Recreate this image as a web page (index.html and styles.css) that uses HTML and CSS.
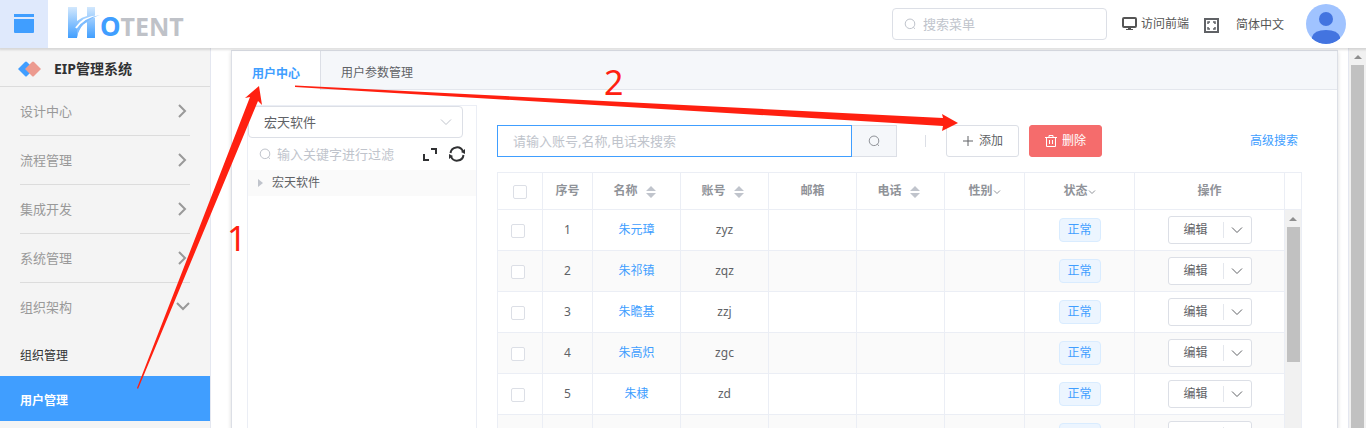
FILE: index.html
```html
<!DOCTYPE html>
<html lang="zh-CN">
<head>
    <meta charset="UTF-8">
    <meta name="viewport" content="width=device-width, initial-scale=1.0">
    <title>EIP管理系统</title>
    <link rel="stylesheet" href="styles.css">
</head>
<body>
    <!-- shared icons -->
    <svg class="sprite" aria-hidden="true">
        <symbol id="search" viewBox="0 0 12 12"><path d="M9.300 9.300A4.800 4.800 0 1 1 10.800 6q0 2-1.500 3.300l1.700 1.500" fill="none" stroke="currentColor"/></symbol>
        <symbol id="down" viewBox="0 0 12 12"><path d="M1 3.500l5 5 5-5" fill="none" stroke="currentColor"/></symbol>
        <symbol id="small-down" viewBox="0 0 8 8"><path d="M1 2.500l3 3 3-3" fill="none" stroke="currentColor"/></symbol>
        <symbol id="right" viewBox="0 0 14 14"><path d="M3 1l6 6-6 6" fill="none" stroke="currentColor" stroke-width="2"/></symbol>
        <symbol id="sort" viewBox="0 0 10 12"><path d="M0 5l5-5 5 5zM0 7l5 5 5-5z" fill="currentColor"/></symbol>
    </svg>

    <div class="app">
        <header class="header">
            <button class="menu-btn" aria-label="菜单">
                <svg width="20" height="20" viewBox="0 0 20 20"><path d="M0 0h20v3H0zM0 5h20v13q0 1-1 1H1q-1 0-1-1z" fill="#409eff"/></svg>
            </button>
            <a class="logo" href="#">
                <svg width="32" height="32" viewBox="0 0 32 32">
                    <defs>
                        <linearGradient id="blue" gradientUnits="userSpaceOnUse" x1="0" y1="0" x2="0" y2="31">
                            <stop offset="0" stop-color="#d3e8fd"/>
                            <stop offset="1" stop-color="#419fff"/>
                        </linearGradient>
                    </defs>
                    <path d="M0 0h9v14q5-4 10-5V0h8v31h-8V15Q10 19 9 31H0z" fill="url(#blue)"/>
                    <path d="M8 21Q15 10 31 9" fill="none" stroke="#fff" stroke-width="2"/>
                    <path d="M9 22Q17 10 32 8q-9 3-13 7Q12 18 9 30z" fill="#7dbcff"/>
                </svg>
                <span class="logo-o">O</span><span class="logo-text">TENT</span>
            </a>
            <label class="search-menu">
                <svg width="12" height="12"><use href="#search"/></svg>
                <input type="text" placeholder="搜索菜单" aria-label="搜索菜单">
            </label>
            <a class="header-link front" href="#">
                <svg width="15" height="14" viewBox="0 0 15 14"><rect x="1" y="1" width="13" height="9" rx="1" fill="none" stroke="currentColor" stroke-width="2"/><path d="M6 10h3v2h2v1H4v-1h2z" fill="currentColor"/></svg>
                访问前端
            </a>
            <button class="full-btn" aria-label="全屏">
                <svg width="15" height="15" viewBox="0 0 15 15"><rect x="1" y="1" width="13" height="13" fill="none" stroke="currentColor" stroke-width="2"/><path d="M4 6V4h2M9 4h2v2M11 9v2H9M6 11H4V9" fill="none" stroke="currentColor" stroke-width="1.500"/></svg>
            </button>
            <a class="header-link lang" href="#">简体中文</a>
            <svg class="avatar" width="40" height="40" viewBox="0 0 40 40">
                <clipPath id="circle"><circle cx="20" cy="20" r="20"/></clipPath>
                <g clip-path="url(#circle)"><rect width="40" height="40" fill="#a0c3ff"/><circle cx="20" cy="15" r="7" fill="#4374e0"/><path d="M6 33q2-7 14-7t14 7v2q-6 5-14 5T6 35z" fill="#4374e0"/></g>
            </svg>
        </header>

        <div class="body">
            <nav class="sidebar">
                <div class="system">
                    <svg width="24" height="16" viewBox="0 0 24 16"><path d="M0 8l7-7q1-1 2 0l7 7-7 7q-1 1-2 0z" fill="#409eff"/><path d="M7 8l7-7q1-1 2 0l7 7-7 7q-1 1-2 0z" fill="#ec9a8f"/></svg>
                    EIP管理系统
                </div>
                <a class="menu-item" href="#">设计中心<svg width="14" height="14"><use href="#right"/></svg></a>
                <a class="menu-item" href="#">流程管理<svg width="14" height="14"><use href="#right"/></svg></a>
                <a class="menu-item" href="#">集成开发<svg width="14" height="14"><use href="#right"/></svg></a>
                <a class="menu-item" href="#">系统管理<svg width="14" height="14"><use href="#right"/></svg></a>
                <a class="menu-item open" href="#">组织架构<svg width="14" height="14"><use href="#right"/></svg></a>
                <a class="sub-item" href="#">组织管理</a>
                <a class="sub-item active" href="#">用户管理</a>
            </nav>

            <main class="main">
                <section class="panel">
                    <div class="tabs">
                        <a class="tab active" href="#">用户中心</a>
                        <a class="tab" href="#">用户参数管理</a>
                    </div>
                    <div class="content">
                        <aside class="tree">
                            <div class="select">
                                <select aria-label="维度"><option>宏天软件</option></select>
                                <svg width="12" height="12"><use href="#down"/></svg>
                            </div>
                            <div class="filter">
                                <svg class="muted" width="12" height="12"><use href="#search"/></svg>
                                <input type="text" placeholder="输入关键字进行过滤" aria-label="过滤">
                                <button aria-label="展开"><svg width="14" height="14" viewBox="0 0 14 14"><path d="M1 7v6h5M8 2h5v5" fill="none" stroke="currentColor" stroke-width="2"/></svg></button>
                                <button aria-label="刷新"><svg width="16" height="16" viewBox="0 0 16 16"><path d="M1.500 7A6.500 6.500 0 0 1 14 5.500M14.500 9A6.500 6.500 0 0 1 2 10.500" fill="none" stroke="currentColor" stroke-width="2"/><path d="M16 3v5l-4-2zM0 13V8l4 2z" fill="currentColor"/></svg></button>
                            </div>
                            <div class="node">
                                <svg width="5" height="8" viewBox="0 0 5 8"><path d="M0 0l5 4-5 4z" fill="#c0c4cc"/></svg>
                                宏天软件
                            </div>
                        </aside>

                        <div class="list">
                            <div class="toolbar">
                                <div class="search">
                                    <input type="text" placeholder="请输入账号,名称,电话来搜索" aria-label="搜索用户">
                                    <button aria-label="搜索"><svg width="12" height="12"><use href="#search"/></svg></button>
                                </div>
                                <span class="divider"></span>
                                <button class="btn"><svg width="12" height="12" viewBox="0 0 12 12"><path d="M6 1v10M1 6h10" stroke="currentColor"/></svg>添加</button>
                                <button class="btn danger"><svg width="12" height="12" viewBox="0 0 12 12"><path d="M0 2.500h12M4 2V.5h4V2M1.500 2.500v9h9v-9M4.500 5v4M7.500 5v4" fill="none" stroke="currentColor"/></svg>删除</button>
                                <a class="advanced" href="#">高级搜索</a>
                            </div>

                            <div class="table-box">
                                <table>
                                    <colgroup>
                                        <col class="c-check"><col class="c-no"><col class="c-text"><col class="c-text"><col class="c-text"><col class="c-text"><col class="c-sex"><col class="c-status"><col class="c-action">
                                    </colgroup>
                                    <thead>
                                        <tr>
                                            <th><input type="checkbox" aria-label="全选"></th>
                                            <th>序号</th>
                                            <th>名称<svg class="sort" width="10" height="12"><use href="#sort"/></svg></th>
                                            <th>账号<svg class="sort" width="10" height="12"><use href="#sort"/></svg></th>
                                            <th>邮箱</th>
                                            <th>电话<svg class="sort" width="10" height="12"><use href="#sort"/></svg></th>
                                            <th>性别<svg width="8" height="8"><use href="#small-down"/></svg></th>
                                            <th>状态<svg width="8" height="8"><use href="#small-down"/></svg></th>
                                            <th>操作</th>
                                        </tr>
                                    </thead>
                                    <tbody id="users"></tbody>
                                </table>
                                <div class="gutter">
                                    <div class="gutter-head"></div>
                                    <div class="scrollbar"><i class="up"></i><i class="thumb"></i></div>
                                </div>
                            </div>
                        </div>
                    </div>
                </section>
            </main>
            <div class="scrollbar page-scroll"><i class="up"></i><i class="thumb"></i></div>
        </div>

        <!-- step arrows over the page -->
        <svg class="steps" width="1366" height="428" viewBox="0 0 1366 428">
            <path d="M138 389l-1-1L250 97l-5 1 14-12 3 19-4-4z"/>
            <path d="M295 85.500L943 118l-1-4 16 9-16 8 1-5L295 87z"/>
            <text x="227" y="251">1</text>
            <text x="604" y="95">2</text>
        </svg>
    </div>

    <script>
        const users = [
            ['朱元璋', 'zyz'],
            ['朱祁镇', 'zqz'],
            ['朱瞻基', 'zzj'],
            ['朱高炽', 'zgc'],
            ['朱棣', 'zd'],
            ['', '']
        ];

        // Fill the user table
        document.getElementById('users').innerHTML = users.map(([name, account], i) => `
            <tr>
                <td><input type="checkbox" aria-label="选择${name}"></td>
                <td>${name ? i + 1 : ''}</td>
                <td><a href="#">${name}</a></td>
                <td>${account}</td>
                <td></td>
                <td></td>
                <td></td>
                <td><span class="tag">${name ? '正常' : ''}</span></td>
                <td><button class="edit"><span>${name ? '编辑' : ''}</span><svg width="12" height="12"><use href="#down"/></svg></button></td>
            </tr>`).join('');
    </script>
</body>
</html>
```
FILE: styles.css
```css
* {
    box-sizing: border-box;
}

body {
    margin: 0;
    font-family: "Noto Sans", "Noto Sans CJK SC", sans-serif;
    font-size: 12px;
    line-height: 16px;
    color: #606266;
    background-color: #fff;
}

a {
    color: #409eff;
    text-decoration: none;
}

button, input, select {
    font: inherit;
    color: inherit;
}

button {
    padding: 0;
    border: none;
    background: none;
    cursor: pointer;
}

input::placeholder {
    color: #c0c4cc;
    opacity: 1;
}

svg {
    flex: none;
}

.sprite {
    display: none;
}

.app {
    position: relative;
    display: flex;
    flex-direction: column;
    height: 100vh;
    overflow: hidden;
}

/* header */
.header {
    position: relative;
    z-index: 1;
    display: flex;
    align-items: center;
    flex: none;
    height: 48px;
    padding-right: 20px;
    background-color: #fff;
    box-shadow: 0 1px 2px 1px rgba(0, 0, 0, 0.12);
}

.menu-btn {
    display: flex;
    align-items: center;
    justify-content: center;
    width: 48px;
    height: 48px;
    background-color: #dfe9fc;
}

.logo {
    display: flex;
    align-items: center;
    margin-left: 20px;
    margin-right: auto;
    padding-bottom: 2px;
    font-size: 25px;
    font-weight: bold;
    line-height: 32px;
}

.logo-o {
    font-size: 26px;
    padding-top: 6px;
}

.logo-text {
    color: #bfc2c8;
    padding-top: 6px;
}

.search-menu {
    display: flex;
    align-items: center;
    gap: 7px;
    width: 215px;
    height: 32px;
    padding: 0 11px;
    border: 1px solid #dcdfe6;
    border-radius: 4px;
    color: #c0c4cc;
}

.search-menu input, .filter input {
    flex: 1;
    min-width: 0;
    padding: 0;
    border: none;
    outline: none;
    background: none;
    font-size: 13px;
}

.header-link {
    display: flex;
    align-items: center;
    gap: 4px;
    color: #555;
}

.front {
    margin-left: 15px;
}

.full-btn {
    display: flex;
    margin-left: 15px;
    padding-top: 2px;
    color: #606266;
}

.lang {
    margin-left: 17px;
    padding-top: 2px;
}

.avatar {
    margin-left: 22px;
}

.body {
    display: flex;
    flex: 1;
    min-height: 0;
}

/* sidebar */
.sidebar {
    flex: none;
    width: 211px;
    border-right: 1px solid #e4e7f0;
    background-color: #f4f4f4;
}

.system {
    display: flex;
    align-items: center;
    gap: 12px;
    height: 39px;
    padding: 4px 18px 0;
    border-bottom: 1px solid #dcdcdc;
    color: #303133;
    font-size: 14px;
    font-weight: bold;
}

.menu-item {
    display: flex;
    align-items: center;
    justify-content: space-between;
    height: 49px;
    margin: 0 20px;
    border-bottom: 1px solid #dcdcdc;
    color: #999;
    font-size: 13px;
}

.menu-item.open {
    height: 48px;
    border-bottom: none;
}

.menu-item.open svg {
    transform: rotate(90deg);
}

.sub-item {
    display: flex;
    align-items: center;
    height: 45px;
    padding: 4px 20px 0;
    color: #303133;
}

.sub-item.active {
    background-color: #409eff;
    color: #fff;
    font-weight: bold;
}

/* main panel */
.main {
    flex: 1;
    min-width: 0;
    padding: 2px 10px 0 20px;
}

.panel {
    height: 100%;
    border: 1px solid #dcdfe6;
    border-bottom: none;
    box-shadow: 0 2px 4px rgba(0, 0, 0, 0.15);
}

.tabs {
    display: flex;
    height: 39px;
    border-bottom: 1px solid #e4e7ed;
    background-color: #f5f7fa;
}

.tab {
    display: flex;
    align-items: center;
    padding: 6px 20px 0;
    color: #606266;
}

.tab.active {
    height: 39px;
    border-right: 1px solid #dcdfe6;
    background-color: #fff;
    color: #409eff;
    font-weight: bold;
}

.content {
    display: flex;
    gap: 20px;
    padding: 15px 35px 0 15px;
}

/* organisation tree */
.tree {
    flex: none;
    width: 230px;
    height: 400px;
    border: 1px solid #ebeef5;
}

.select {
    position: relative;
    width: 215px;
    color: #c0c4cc;
}

.select select {
    display: block;
    width: 100%;
    height: 32px;
    padding: 0 15px;
    border: 1px solid #dcdfe6;
    border-radius: 4px;
    appearance: none;
    background-color: #fff;
    color: #606266;
    font-size: 13px;
}

.select svg {
    position: absolute;
    top: 10px;
    right: 11px;
}

.filter {
    display: flex;
    align-items: center;
    gap: 6px;
    height: 32px;
    padding: 0 11px 0 11px;
    color: #303133;
}

.filter .muted {
    color: #c0c4cc;
}

.filter button {
    display: flex;
    margin-left: 6px;
}

.node {
    display: flex;
    align-items: center;
    gap: 9px;
    height: 26px;
    padding-left: 10px;
    background-color: #fafafa;
}

/* user list */
.list {
    flex: 1;
    min-width: 0;
    padding-top: 20px;
}

.toolbar {
    display: flex;
    align-items: center;
    height: 32px;
}

.search {
    display: flex;
    width: 400px;
    height: 32px;
}

.search input {
    flex: 1;
    min-width: 0;
    padding: 0 15px;
    border: 1px solid #409eff;
    outline: none;
    font-size: 13px;
}

.search button {
    display: flex;
    align-items: center;
    justify-content: center;
    width: 45px;
    border: 1px solid #dcdfe6;
    border-left: none;
    background-color: #f5f7fa;
    color: #909399;
}

.divider {
    width: 1px;
    height: 12px;
    margin: 0 20px 0 28px;
    background-color: #dcdfe6;
}

.btn {
    display: flex;
    align-items: center;
    justify-content: center;
    gap: 5px;
    width: 73px;
    height: 32px;
    border: 1px solid #dcdfe6;
    border-radius: 3px;
    background-color: #fff;
}

.btn.danger {
    margin-left: 10px;
    border-color: #f56c6c;
    background-color: #f56c6c;
    color: #fff;
}

.advanced {
    margin-left: auto;
    margin-right: 4px;
}

.table-box {
    display: flex;
    margin-top: 15px;
    border: 1px solid #ebeef5;
}

table {
    flex: 1;
    min-width: 0;
    border-collapse: separate;
    border-spacing: 0;
    table-layout: fixed;
}

.c-check { width: 45px; }
.c-no { width: 50px; }
.c-text { width: 88px; }
.c-sex { width: 80px; }
.c-status { width: 110px; }
.c-action { width: 150px; }

th, td {
    height: 41px;
    padding: 0;
    border-right: 1px solid #ebeef5;
    border-bottom: 1px solid #ebeef5;
    text-align: center;
    vertical-align: middle;
}

th {
    height: 37px;
    color: #909399;
}

tbody tr:nth-child(even) {
    background-color: #fafafa;
}

td input, th input {
    display: block;
    width: 14px;
    height: 14px;
    margin: 2px auto 0 13px;
    border: 1px solid #dcdfe6;
    border-radius: 2px;
    appearance: none;
    background-color: #fff;
}

th input {
    margin-left: 15px;
}

th svg {
    vertical-align: middle;
    color: #909399;
}

th .sort {
    margin: 0 4px 0 8px;
    color: #c0c4cc;
}

.tag {
    display: inline-block;
    width: 42px;
    height: 24px;
    border: 1px solid #d9ecff;
    border-radius: 4px;
    background-color: #ecf5ff;
    color: #409eff;
    line-height: 22px;
    vertical-align: middle;
}

.edit {
    display: inline-flex;
    align-items: center;
    width: 84px;
    height: 28px;
    border: 1px solid #dcdfe6;
    border-radius: 3px;
    background-color: #fff;
    vertical-align: middle;
}

.edit span {
    flex: 1;
    height: 16px;
    border-right: 1px solid #e4e7ed;
}

.edit svg {
    margin: 0 8px 0 7px;
}

/* scrollbars */
.gutter {
    display: flex;
    flex-direction: column;
    flex: none;
    width: 16px;
}

.gutter-head {
    height: 37px;
    border-bottom: 1px solid #ebeef5;
}

.scrollbar {
    display: flex;
    flex-direction: column;
    align-items: center;
    flex: 1;
    background-color: #f1f1f1;
}

.scrollbar .up {
    margin: 7px 0 6px;
    border: 4px solid transparent;
    border-top: none;
    border-bottom-color: #8f8f8f;
}

.scrollbar .thumb {
    width: 13px;
    height: 135px;
    background-color: #c1c1c1;
}

.page-scroll {
    flex: none;
    width: 18px;
    border-left: 1px solid #e4e7f0;
}

.page-scroll .thumb {
    flex: 1;
}

/* step arrows */
.steps {
    position: absolute;
    z-index: 2;
    top: 0;
    left: 0;
    pointer-events: none;
    fill: #ff2010;
    font-size: 34px;
}
```
